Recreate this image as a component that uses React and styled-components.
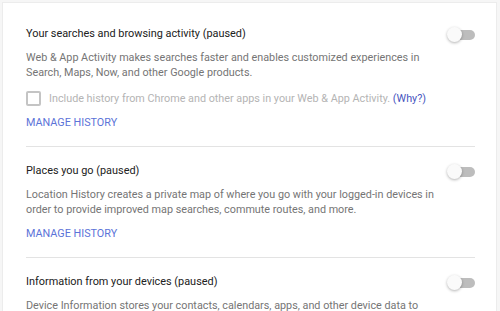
import React from "react";
import styled, { createGlobalStyle } from "styled-components";

const GlobalStyle = createGlobalStyle`
  html, body {
    margin: 0;
    padding: 0;
    background: #f6f6f6;
    font-family: Roboto, "Liberation Sans", Arial, sans-serif;
    overflow: hidden;
  }
`;

const Card = styled.div`
  margin: 2px 3px 0 2px;
  height: 320px;
  background: #ffffff;
  border: 1px solid #ececec;
  border-bottom: none;
  padding: 7px 21px 0 23px;
  box-sizing: border-box;
`;

const Section = styled.div`
  padding: 14px 0 15px;
  border-top: ${(p) => (p.$first ? "none" : "1px solid #e3e3e3")};
`;

const Header = styled.div`
  display: flex;
  align-items: center;
  justify-content: space-between;
  height: 20px;
`;

const Title = styled.div`
  font-size: 10.9px;
  line-height: 20px;
  color: #212121;
`;

const Toggle = styled.div`
  position: relative;
  width: 28px;
  height: 20px;
  margin-top: 2px;
  flex-shrink: 0;
`;

const Track = styled.div`
  position: absolute;
  left: 6px;
  right: 0;
  top: 5px;
  height: 10px;
  border-radius: 5px;
  background: #bdbdbd;
`;

const Knob = styled.div`
  position: absolute;
  left: 0;
  top: 2px;
  width: 15px;
  height: 15px;
  border-radius: 50%;
  background: #fafafa;
  box-shadow: 0 1px 3px rgba(0, 0, 0, 0.3);
`;

const Desc = styled.div`
  margin-top: 6px;
  font-size: 10.8px;
  line-height: 15px;
  color: #757575;
`;

const CheckRow = styled.label`
  display: flex;
  align-items: center;
  gap: 8px;
  margin-top: 10px;
  height: 16px;
  font-size: 10.8px;
  color: #b4b4b4;
`;

const Box = styled.span`
  width: 11px;
  height: 11px;
  border: 2px solid #c4c4c4;
  border-radius: 2px;
  flex-shrink: 0;
`;

const Why = styled.span`
  color: #4756c0;
`;

const Manage = styled.div`
  margin-top: 9px;
  font-size: 10.8px;
  line-height: 16px;
  color: #5c73d8;
  text-transform: uppercase;
`;

const Switch = () => (
  <Toggle>
    <Track />
    <Knob />
  </Toggle>
);

export default function App() {
  return (
    <>
      <GlobalStyle />
      <Card>
        <Section $first>
          <Header>
            <Title>Your searches and browsing activity (paused)</Title>
            <Switch />
          </Header>
          <Desc>
            Web &amp; App Activity makes searches faster and enables customized experiences in
            <br />
            Search, Maps, Now, and other Google products.
          </Desc>
          <CheckRow>
            <Box />
            <span>
              Include history from Chrome and other apps in your Web &amp; App Activity.{" "}
              <Why>(Why?)</Why>
            </span>
          </CheckRow>
          <Manage>Manage history</Manage>
        </Section>
        <Section>
          <Header>
            <Title>Places you go (paused)</Title>
            <Switch />
          </Header>
          <Desc>
            Location History creates a private map of where you go with your logged-in devices in
            <br />
            order to provide improved map searches, commute routes, and more.
          </Desc>
          <Manage>Manage history</Manage>
        </Section>
        <Section>
          <Header>
            <Title>Information from your devices (paused)</Title>
            <Switch />
          </Header>
          <Desc>
            Device Information stores your contacts, calendars, apps, and other device data to
            <br />
            improve your experience across Google services.
          </Desc>
        </Section>
      </Card>
    </>
  );
}
